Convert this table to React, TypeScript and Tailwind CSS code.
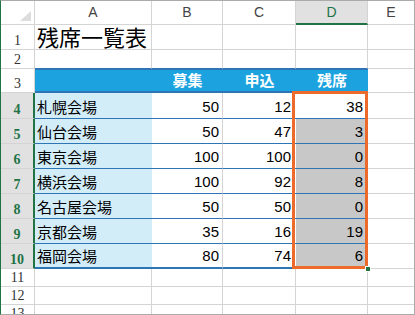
import React from 'react';

const rows = [
  { n: 4, name: '札幌会場', b: 50, c: 12, d: 38 },
  { n: 5, name: '仙台会場', b: 50, c: 47, d: 3 },
  { n: 6, name: '東京会場', b: 100, c: 100, d: 0 },
  { n: 7, name: '横浜会場', b: 100, c: 92, d: 8 },
  { n: 8, name: '名古屋会場', b: 50, c: 50, d: 0 },
  { n: 9, name: '京都会場', b: 35, c: 16, d: 19 },
  { n: 10, name: '福岡会場', b: 80, c: 74, d: 6 },
];

const RowHead: React.FC<{ n: number; sel?: boolean; h?: string }> = ({ n, sel }) => (
  <div
    className={
      sel
        ? "w-[34px] shrink-0 flex items-end justify-center pb-[1px] border-b border-b-[#d4d4d4] border-r-2 border-r-[#217346] bg-[#e1e1e1] text-[#217346] font-bold font-['Liberation_Serif',serif] text-[14px] leading-none"
        : "w-[34px] shrink-0 flex items-end justify-center pb-[1px] border-b border-r border-[#d4d4d4] text-[#333] font-['Liberation_Serif',serif] text-[14px] leading-none"
    }
  >
    {n}
  </div>
);

const PlainRow: React.FC<{ n: number; h: string; blueBottom?: boolean; children?: React.ReactNode }> = ({ n, h, blueBottom, children }) => (
  <div className={`flex ${h}`}>
    <RowHead n={n} />
    <div className={`w-[117px] shrink-0 border-r border-r-[#d4d4d4] border-b ${blueBottom ? 'border-b-[#2e75b6]' : 'border-b-[#d4d4d4]'} flex items-end pl-[2px]`}>
      {children}
    </div>
    <div className={`w-[71px] shrink-0 border-r border-r-[#d4d4d4] border-b ${blueBottom ? 'border-b-[#2e75b6]' : 'border-b-[#d4d4d4]'}`} />
    <div className={`w-[73px] shrink-0 border-r border-r-[#d4d4d4] border-b ${blueBottom ? 'border-b-[#2e75b6]' : 'border-b-[#d4d4d4]'}`} />
    <div className={`w-[72px] shrink-0 border-r border-r-[#d4d4d4] border-b ${blueBottom ? 'border-b-[#2e75b6]' : 'border-b-[#d4d4d4]'}`} />
    <div className="w-[46px] shrink-0 border-b border-[#d4d4d4]" />
  </div>
);

export default function App() {
  return (
    <div className="relative w-[415px] h-[315px] overflow-hidden bg-white border border-[#ababab] border-l-[#217346] font-['Liberation_Sans','Noto_Sans_CJK_JP',sans-serif] text-black">
      {/* column headers */}
      <div className="flex h-[24px] text-[14px] text-[#444]">
        <div className="w-[34px] shrink-0 border-r border-b border-[#d4d4d4] flex items-end justify-end p-[3px]">
          <svg width="11" height="10" viewBox="0 0 11 10">
            <polygon points="11,0 11,10 0,10" fill="#dcdcdc" />
          </svg>
        </div>
        <div className="w-[117px] shrink-0 border-r border-b border-[#d4d4d4] flex items-center justify-center">A</div>
        <div className="w-[71px] shrink-0 border-r border-b border-[#d4d4d4] flex items-center justify-center">B</div>
        <div className="w-[73px] shrink-0 border-r border-b border-[#d4d4d4] flex items-center justify-center">C</div>
        <div className="w-[72px] shrink-0 border-r border-r-[#d4d4d4] border-b-2 border-b-[#217346] bg-[#e1e1e1] text-[#217346] flex items-center justify-center">D</div>
        <div className="w-[46px] shrink-0 border-b border-[#d4d4d4] flex items-center justify-center">E</div>
      </div>

      <PlainRow n={1} h="h-[25px]">
        <span className="text-[22px] leading-none pb-[2px] font-['Noto_Sans_CJK_JP',sans-serif]">残席一覧表</span>
      </PlainRow>
      <PlainRow n={2} h="h-[19px]" blueBottom />

      {/* table header */}
      <div className="flex h-[24px]">
        <RowHead n={3} />
        <div className="flex border-t border-b-2 border-[#2e75b6] bg-[#1ca3df] text-white font-bold text-[15px] font-['Noto_Sans_CJK_JP',sans-serif]">
          <div className="w-[117px]" />
          <div className="w-[71px] flex items-center justify-center">募集</div>
          <div className="w-[73px] flex items-center justify-center">申込</div>
          <div className="w-[72px] flex items-center justify-center">残席</div>
        </div>
        <div className="w-[46px] shrink-0 border-b border-[#d4d4d4]" />
      </div>

      {rows.map((r, i) => {
        const last = i === rows.length - 1;
        const line = last ? 'border-b-2 border-b-[#2e75b6]' : 'border-b border-b-[#2e75b6]';
        return (
          <div key={r.n} className={`flex ${i === 0 ? 'h-[26px]' : 'h-[25px]'} text-[15px] leading-none`}>
            <RowHead n={r.n} sel />
            <div className={`w-[117px] shrink-0 bg-[#d2ecf8] ${line} flex items-end pl-[2px] pb-[4px] font-['Noto_Sans_CJK_JP',sans-serif]`}>
              {r.name}
            </div>
            <div className={`w-[71px] shrink-0 border-r border-r-[#d4d4d4] ${line} flex items-end justify-end pr-[3px] pb-[4px]`}>
              {r.b}
            </div>
            <div className={`w-[73px] shrink-0 ${line} flex items-end justify-end pr-[5px] pb-[4px]`}>
              {r.c}
            </div>
            <div className={`w-[72px] shrink-0 ${i === 0 ? '' : 'bg-[#c8c8c8]'} ${line} flex items-end justify-end pr-[5px] pb-[4px]`}>
              {r.d}
            </div>
            <div className="w-[46px] shrink-0 border-b border-[#d4d4d4]" />
          </div>
        );
      })}

      <PlainRow n={11} h="h-[18px]" />
      <PlainRow n={12} h="h-[18px]" />
      <PlainRow n={13} h="h-[18px]" />

      {/* selection D4:D10 */}
      <div className="absolute left-[291px] top-[90px] w-[76px] h-[178px] border-[3px] border-[#ec6a2c]" />
      <div className="absolute left-[364px] top-[265px] w-[6px] h-[6px] bg-[#217346] border border-white" />
    </div>
  );
}
